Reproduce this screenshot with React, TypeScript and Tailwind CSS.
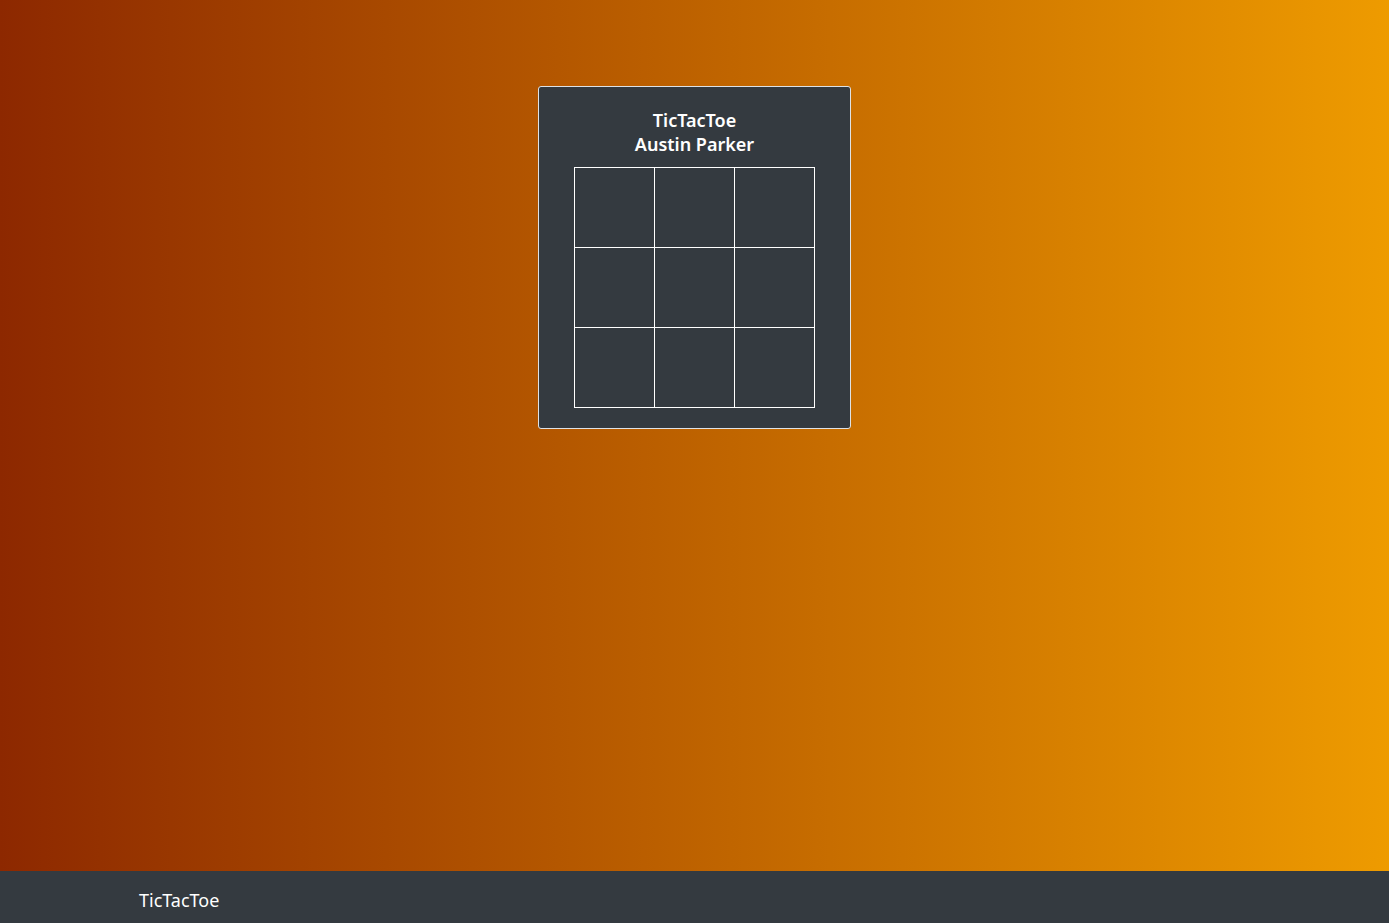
export default function App() {
  const cells = Array.from({ length: 9 }, (_, i) => i)

  return (
    <div className="min-h-screen flex flex-col font-['Noto_Sans',sans-serif]">
      <main className="flex-1 bg-gradient-to-r from-[#8d2800] to-[#ee9b00] pt-[86px]">
        <div className="mx-auto w-[313px] bg-[#343a40] border border-[#dee2e6] rounded-[3px] pt-[21px] pb-[20px] text-center text-white">
          <h1 className="text-[18px] leading-[24px] font-semibold">TicTacToe</h1>
          <h2 className="text-[18px] leading-[24px] font-semibold">Austin Parker</h2>
          <div className="mt-[11px] mx-auto w-[241px] grid grid-cols-3 border-l border-t border-white">
            {cells.map((i) => (
              <div key={i} className="h-[80px] border-r border-b border-white" />
            ))}
          </div>
        </div>
      </main>
      <footer className="h-[52px] bg-[#343a40] text-white flex items-center pl-[139px] pt-[6px]">
        <span className="text-[18px] leading-[24px]">TicTacToe</span>
      </footer>
    </div>
  )
}
